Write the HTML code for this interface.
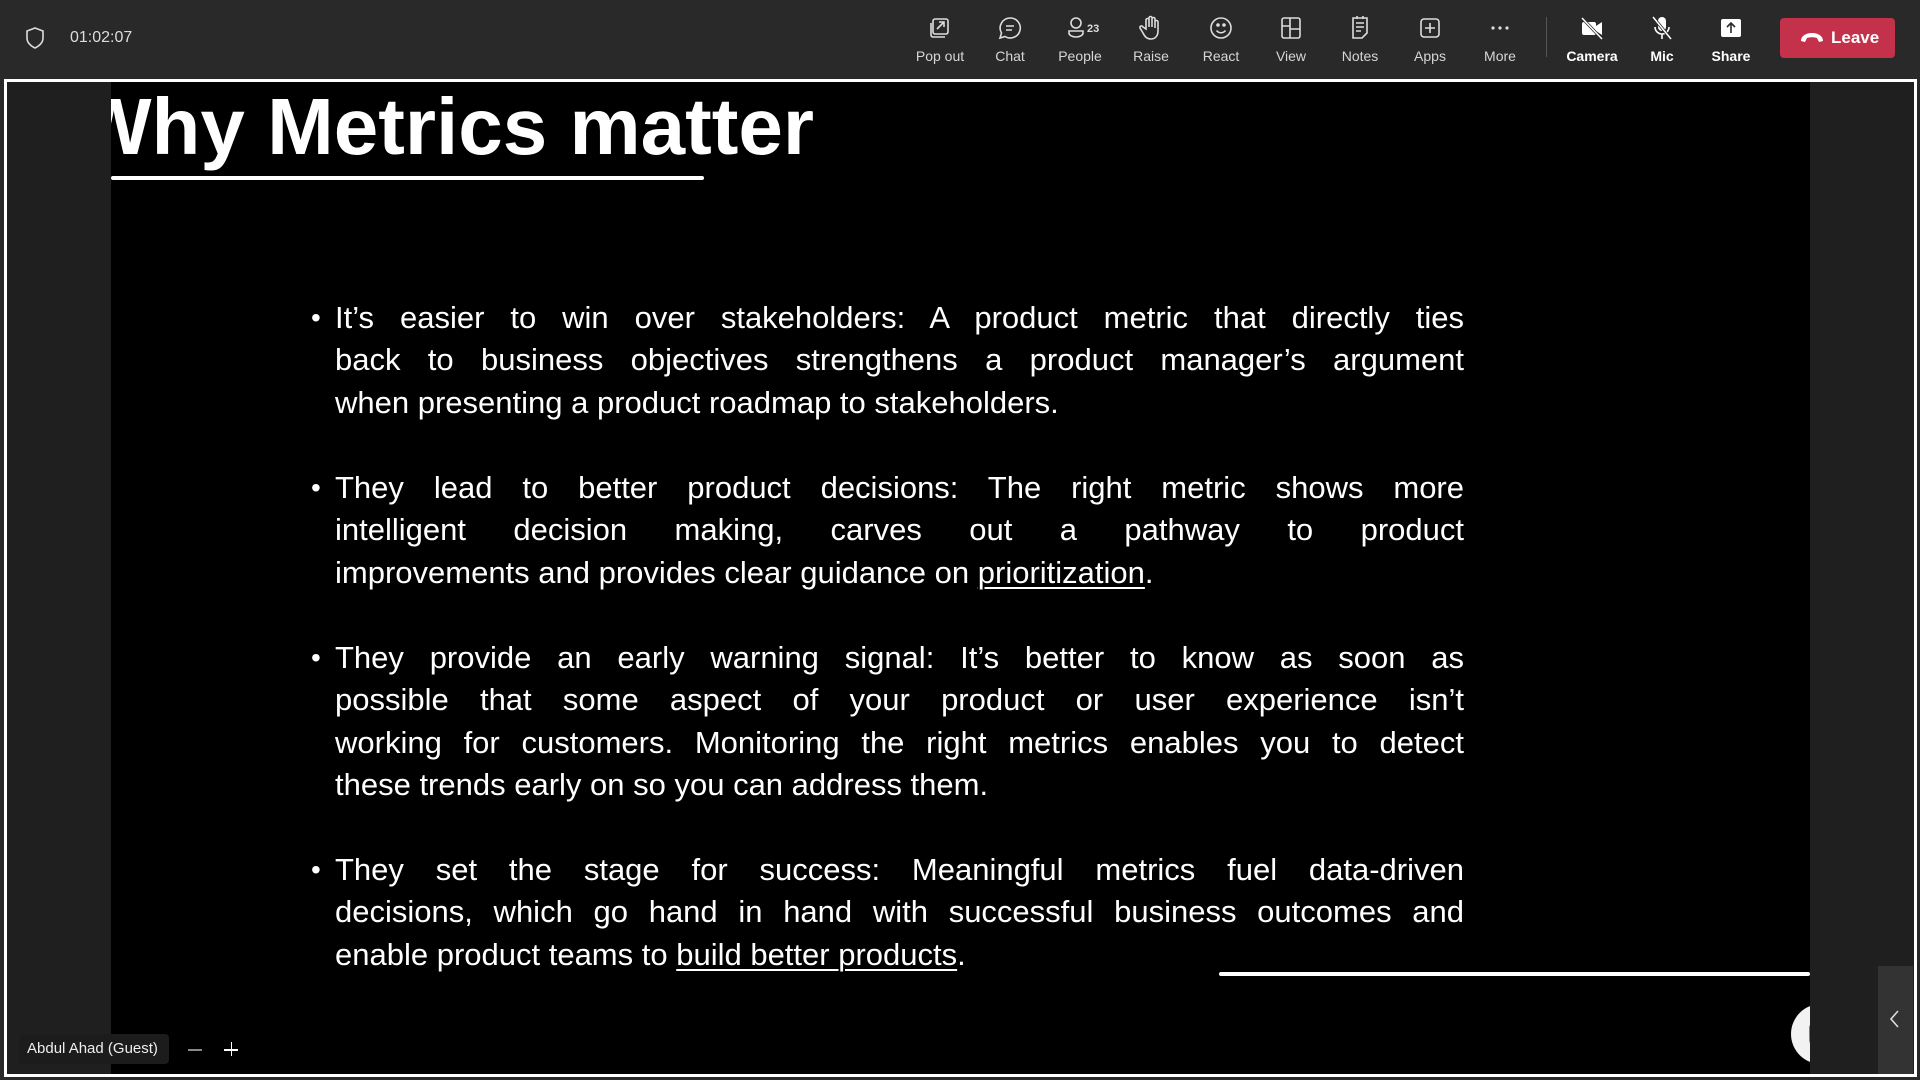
<!DOCTYPE html>
<html><head><meta charset="utf-8"><style>
*{margin:0;padding:0;box-sizing:border-box}
body{width:1920px;height:1080px;background:#292929;font-family:"Liberation Sans",sans-serif;overflow:hidden;position:relative;color:#fff}
.bar{position:absolute;left:0;top:0;width:1920px;height:79px;background:#292929}
.tb{position:absolute;top:15px;width:70px;text-align:center;font-size:14px;color:#d6d6d6}
.tb svg{display:block;margin:0 auto 7px;width:26px;height:26px}
.tb.w{color:#fff;font-weight:bold}
.frame{position:absolute;left:4px;top:79px;width:1913px;height:998px;border:3px solid #fff;background:#1f1f1f;overflow:hidden}
.slide{position:absolute;left:104px;top:0;width:1699px;height:992px;background:#000;overflow:hidden}
.title{position:absolute;right:996px;top:-1px;font-size:80px;font-weight:bold;white-space:nowrap;letter-spacing:0}
.ln{position:absolute;height:4px;background:#fff;border-radius:2px}
.body{position:absolute;left:224px;top:0;width:1129px;font-size:31px}
.l{position:absolute;left:0;width:1129px;height:42px;line-height:42px;white-space:nowrap;text-align:justify;text-align-last:justify}
.l.e{text-align-last:left}
.b{position:absolute;left:-24px;font-size:28px;line-height:42px}
u{text-decoration-thickness:2px;text-underline-offset:4px}
</style></head><body>
<div class="bar">
<svg style="position:absolute;left:25px;top:27px" width="20" height="22" viewBox="0 0 20 22"><path d="M10 1 L18 4 V11 C18 16 14 19 10 21 C6 19 2 16 2 11 V4 Z" fill="none" stroke="#ddd" stroke-width="1.6"/></svg>
<div style="position:absolute;left:70px;top:29px;font-size:16px;color:#ddd">01:02:07</div>

<div class="tb" style="left:905px"><svg viewBox="0 0 26 26" fill="none" stroke="#ddd" stroke-width="1.6"><rect x="6" y="4" width="15" height="15" rx="2"/><path d="M4 8v12a2 2 0 0 0 2 2h12M10 14l7-7M12 7h5v5"/></svg>Pop out</div>
<div class="tb" style="left:975px"><svg viewBox="0 0 26 26" fill="none" stroke="#ddd" stroke-width="1.6"><path d="M13 3a10 10 0 1 1-5 18.5L3 23l1.5-5A10 10 0 0 1 13 3z"/><path d="M9 11h8M9 15h6"/></svg>Chat</div>
<div class="tb" style="left:1045px"><svg viewBox="0 0 26 26" style="width:44px" fill="none" stroke="#ddd" stroke-width="1.6"><circle cx="9" cy="8" r="5"/><path d="M2 16h14v2a7 4 0 0 1-14 0z"/><text x="20" y="17" font-size="11" font-weight="bold" fill="#ddd" stroke="none" font-family="Liberation Sans">23</text></svg>People</div>
<div class="tb" style="left:1116px"><svg viewBox="0 0 26 26" fill="none" stroke="#ddd" stroke-width="1.6"><path d="M8 14V5a1.5 1.5 0 0 1 3 0v7V3a1.5 1.5 0 0 1 3 0v9V4a1.5 1.5 0 0 1 3 0v9V7a1.5 1.5 0 0 1 3 0v9c0 5-3 8-7 8s-6-2-8-6l-3-5a1.5 1.5 0 0 1 3-1z"/></svg>Raise</div>
<div class="tb" style="left:1186px"><svg viewBox="0 0 26 26" fill="none" stroke="#ddd" stroke-width="1.6"><circle cx="13" cy="13" r="10"/><path d="M8.5 15.5c2.5 3 6.5 3 9 0"/><circle cx="10" cy="10" r="1" fill="#ddd"/><circle cx="16" cy="10" r="1" fill="#ddd"/></svg>React</div>
<div class="tb" style="left:1256px"><svg viewBox="0 0 26 26" fill="none" stroke="#ddd" stroke-width="1.6"><rect x="4" y="3" width="18" height="20" rx="2"/><path d="M12 3v20M4 11h8M12 14h10"/></svg>View</div>
<div class="tb" style="left:1325px"><svg viewBox="0 0 26 26" fill="none" stroke="#ddd" stroke-width="1.6"><path d="M6 3h14v15l-5 5H6z"/><path d="M9 8h8M9 12h8M9 16h5M10 1v3M16 1v3"/></svg>Notes</div>
<div class="tb" style="left:1395px"><svg viewBox="0 0 26 26" fill="none" stroke="#ddd" stroke-width="1.6"><rect x="4" y="4" width="18" height="18" rx="3"/><path d="M13 8v10M8 13h10"/></svg>Apps</div>
<div class="tb" style="left:1465px"><svg viewBox="0 0 26 26" fill="#ddd"><circle cx="6" cy="13" r="1.6"/><circle cx="13" cy="13" r="1.6"/><circle cx="20" cy="13" r="1.6"/></svg>More</div>
<div style="position:absolute;left:1546px;top:17px;width:1px;height:40px;background:#555"></div>
<div class="tb w" style="left:1557px"><svg viewBox="0 0 26 26"><rect x="3" y="7" width="14" height="13" rx="2" fill="#fff"/><path d="M17 11l6-4v13l-6-4z" fill="#fff"/><path d="M3 3l20 21" stroke="#292929" stroke-width="3"/><path d="M3 3l20 21" stroke="#fff" stroke-width="1.5"/></svg>Camera</div>
<div class="tb w" style="left:1627px"><svg viewBox="0 0 26 26"><rect x="9" y="2" width="8" height="14" rx="4" fill="#fff"/><path d="M6 12a7 7 0 0 0 14 0M13 19v5" fill="none" stroke="#fff" stroke-width="1.6"/><path d="M4 2l18 22" stroke="#292929" stroke-width="3"/><path d="M4 2l18 22" stroke="#fff" stroke-width="1.5"/></svg>Mic</div>
<div class="tb w" style="left:1696px"><svg viewBox="0 0 26 26"><rect x="3" y="4" width="20" height="18" rx="2" fill="#fff"/><path d="M13 18V9M9 12l4-4 4 4" fill="none" stroke="#292929" stroke-width="1.6"/></svg>Share</div>
<div style="position:absolute;left:1780px;top:18px;width:115px;height:40px;background:#c4314b;border-radius:4px;font-size:17px;font-weight:bold;line-height:40px;padding-left:51px">Leave</div>
<svg style="position:absolute;left:1799px;top:30px" width="26" height="14" viewBox="0 0 26 14"><path d="M2 11c0-5 5-8 11-8s11 3 11 8l-4 1-2-4c-3-1-7-1-10 0l-2 4z" fill="#fff"/></svg>
</div>

<div class="frame">
<div class="slide">
<div class="title">Why Metrics matter</div>
<div class="ln" style="left:0;top:94px;width:593px;height:4px"></div>
<div class="ln" style="left:1108px;top:890px;width:591px;height:4px"></div>
<div class="body">
<div class="l" style="top:215px"><span class="b">•</span>It’s easier to win over stakeholders: A product metric that directly ties</div>
<div class="l" style="top:257px">back to business objectives strengthens a product manager’s argument</div>
<div class="l e" style="top:300px">when presenting a product roadmap to stakeholders.</div>
<div class="l" style="top:385px"><span class="b">•</span>They lead to better product decisions: The right metric shows more</div>
<div class="l" style="top:427px">intelligent decision making, carves out a pathway to product</div>
<div class="l e" style="top:470px">improvements and provides clear guidance on <u>prioritization</u>.</div>
<div class="l" style="top:555px"><span class="b">•</span>They provide an early warning signal: It’s better to know as soon as</div>
<div class="l" style="top:597px">possible that some aspect of your product or user experience isn’t</div>
<div class="l" style="top:640px">working for customers. Monitoring the right metrics enables you to detect</div>
<div class="l e" style="top:682px">these trends early on so you can address them.</div>
<div class="l" style="top:767px"><span class="b">•</span>They set the stage for success: Meaningful metrics fuel data-driven</div>
<div class="l" style="top:809px">decisions, which go hand in hand with successful business outcomes and</div>
<div class="l e" style="top:852px">enable product teams to <u>build better products</u>.</div>
</div>
<div style="position:absolute;left:1680px;top:922px;width:60px;height:60px;border-radius:50%;background:#f2f2f2"></div>
<div style="position:absolute;left:1698px;top:940px;width:12px;height:24px;border-radius:6px;background:linear-gradient(#b03ad0,#f06a3a)"></div>
</div>
<div style="position:absolute;left:1871px;top:884px;width:35px;height:108px;background:#333"></div>
<svg style="position:absolute;left:1880px;top:925px" width="16" height="24" viewBox="0 0 16 24"><path d="M11 4l-7 8 7 8" fill="none" stroke="#ddd" stroke-width="1.6"/></svg>
<div style="position:absolute;left:12px;top:952px;width:150px;height:30px;background:#1c1c1c;border-radius:4px;font-size:15px;line-height:30px;padding-left:8px;color:#eee;white-space:nowrap">Abdul Ahad (Guest)</div>
<div style="position:absolute;left:181px;top:967px;width:14px;height:2px;background:#888"></div>
<div style="position:absolute;left:217px;top:967px;width:14px;height:1.5px;background:#fff"></div>
<div style="position:absolute;left:223.5px;top:960px;width:1.5px;height:14px;background:#fff"></div>
</div>
</body></html>
